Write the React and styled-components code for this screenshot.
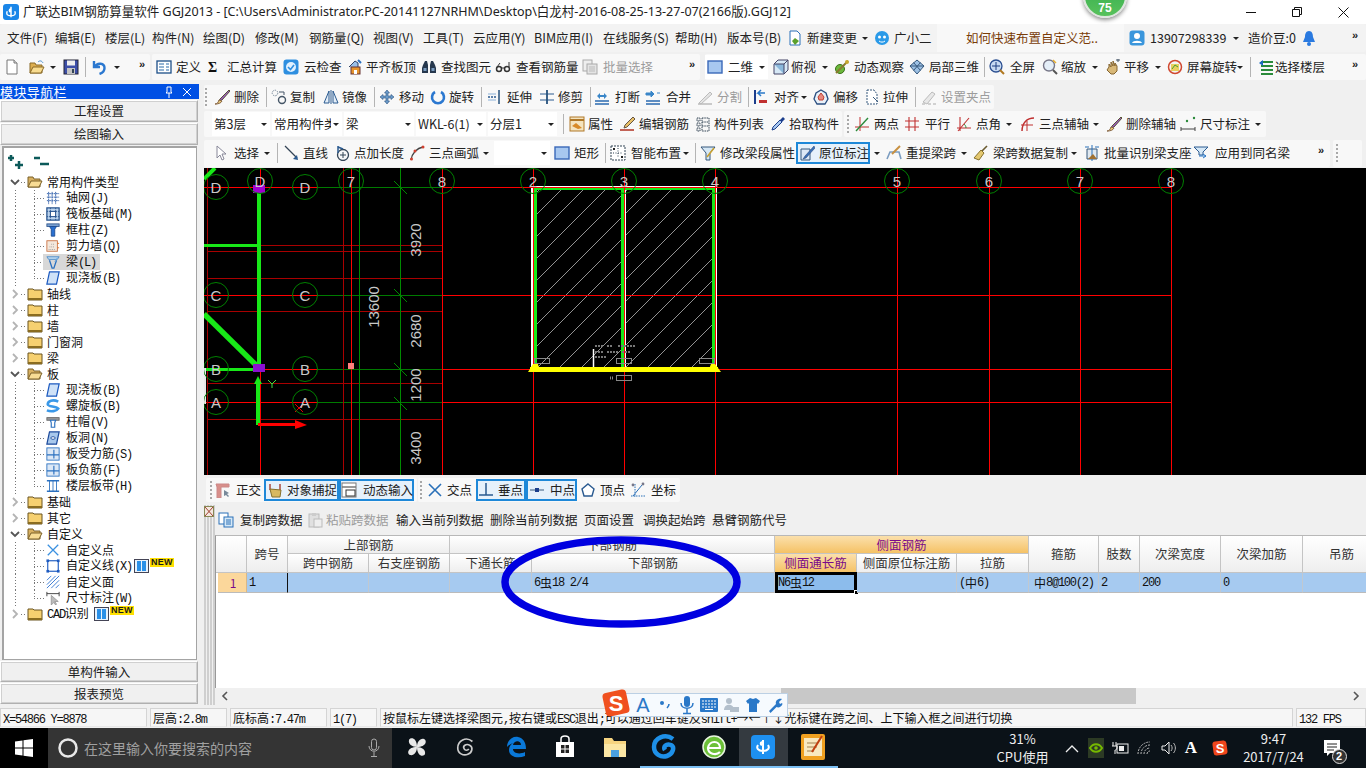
import React from 'react';
import styled, { createGlobalStyle } from 'styled-components';

const Global = createGlobalStyle`
  html, body { margin: 0; padding: 0; background: #f0f0f0; }
  * { box-sizing: border-box; }
`;
const CJK = `"Noto Sans CJK SC", "Noto Sans", "Liberation Sans", sans-serif`;

const Page = styled.div`
  position: relative; width: 1366px; height: 768px; overflow: hidden; background: #f0f0f0;
  font: 12.5px/16px ${CJK}; color: #222; display: flex; flex-direction: column;
`;
/* ---------- icons ---------- */
const icons = {
  new: <><path d="M3 1h7l3 3v11H3z" fill="#fff" stroke="#777"/><path d="M10 1v3h3" fill="#ddd" stroke="#777"/></>,
  open: <><path d="M1 4h5l1 2h6v8H1z" fill="#dcae50" stroke="#8a6a28"/><path d="M4 8h11l-3 6H1z" fill="#f8dc90" stroke="#8a6a28"/><path d="M9 3c2-2 4-1 5 1" fill="none" stroke="#4a90d0"/></>,
  save: <><rect x="1" y="1" width="14" height="14" fill="#3c4ea8" stroke="#223"/><rect x="4" y="1.5" width="8" height="5" fill="#eee"/><rect x="4" y="9" width="8" height="6" fill="#c4c4c4"/><rect x="9" y="10" width="2" height="4" fill="#345"/></>,
  undo: <path d="M3 2v6h6M3.500 8c3-5 10-4 10 1 0 3-2 5-5 6" fill="none" stroke="#2b78d0" strokeWidth="2.400"/>,
  define: <><rect x="1" y="2" width="14" height="12" fill="#fff" stroke="#1c4f88" strokeWidth="1.300"/><path d="M3 5h5M3 8h5M3 11h5M10 5h3M10 8h3M10 11h3" stroke="#2a6aa8"/></>,
  cloud: <><rect x="0.500" y="0.500" width="15" height="15" rx="3" fill="#2e8fe0"/><circle cx="8" cy="8" r="5" fill="#dff0ff"/><path d="M5 8l2.500 2.500L11 6" fill="none" stroke="#2e8fe0" strokeWidth="1.600"/></>,
  flat: <><path d="M2 8l6-6 3 2v4" fill="#9ac0e8" stroke="#346"/><rect x="4" y="8" width="9" height="7" fill="#e8962c" stroke="#633"/><rect x="7" y="11" width="3" height="4" fill="#fff"/><path d="M11 1l3 3" stroke="#2a70c0" strokeWidth="2"/></>,
  bino: <><path d="M2 6l2-4h2l1 4v8H1V9zM14 6l-2-4h-2L9 6v8h6V9z" fill="#26384e"/><rect x="2.500" y="9" width="3" height="3" fill="#7a9cc0"/><rect x="10.500" y="9" width="3" height="3" fill="#7a9cc0"/></>,
  glass: <><circle cx="4" cy="10" r="2.500" fill="none" stroke="#333" strokeWidth="1.500"/><circle cx="12" cy="10" r="2.500" fill="none" stroke="#333" strokeWidth="1.500"/><path d="M6 9h4M2 8l3-4M14 8V3" stroke="#333"/></>,
  batch: <><rect x="1" y="1" width="9" height="11" fill="#eee" stroke="#aaa"/><rect x="5" y="5" width="10" height="10" fill="#e4e4e4" stroke="#aaa"/><path d="M7 8h6M7 10h6M7 12h6" stroke="#bbb"/></>,
  sq: <rect x="1" y="2" width="14" height="12" fill="#a8c8f0" stroke="#3a68b8" strokeWidth="1.400"/>,
  cube: <><path d="M1 5l4-4h10v10l-4 4H1z" fill="#d6e8f6" stroke="#446"/><path d="M1 5h10v10M11 5l4-4" fill="#8ab8dc" stroke="#446"/></>,
  orbit: <><circle cx="6" cy="10" r="4.500" fill="#6cb83c" stroke="#3a7018"/><path d="M2 14L14 2" stroke="#8a7a30" strokeWidth="2"/><circle cx="13" cy="3" r="2" fill="#c8a830"/></>,
  local: <><path d="M8 1l7 6-7 8-7-8z" fill="#9cc0e4" stroke="#36587c"/><path d="M4.500 3.500l7 8M11.500 3.500l-7 8M1 7h14" stroke="#36587c"/></>,
  full: <><circle cx="7" cy="7" r="6" fill="#c8daf2" stroke="#2a4e90" strokeWidth="1.300"/><path d="M7 3v8M3 7h8" stroke="#1c3c80"/><path d="M11 11l4 4" stroke="#b07820" strokeWidth="2"/></>,
  zoom: <><circle cx="7" cy="6.500" r="5.500" fill="#e4eef8" stroke="#778" strokeWidth="1.400"/><path d="M11 11l4 4" stroke="#555" strokeWidth="2"/><path d="M11 1l3 3" stroke="#e8b030" strokeWidth="1.500"/></>,
  hand: <><path d="M4 8V5l2 3V3l2 4V2l2 5V4l2 3v5l-3 3H6l-4-4z" fill="#d8b878" stroke="#846430"/><path d="M11 1h4M13 0v3" stroke="#456"/></>,
  spin: <><circle cx="8" cy="8" r="6.500" fill="#f4f4f4" stroke="#d04830" strokeWidth="1.500"/><rect x="4" y="5" width="8" height="7" fill="#e8d060"/><path d="M5 10l3-4 3 2" stroke="#48a030" fill="none"/></>,
  floors: <><path d="M3 3h12M3 7h12M3 11h12M3 15h12" stroke="#2a8a3a" strokeWidth="2"/><path d="M5 1L1 4l4 3z" fill="#1c6ac0"/></>,
  brush: <><path d="M15 1L6 10l-1 2 3-1 8-9z" fill="#9c5ac0" stroke="#553"/><path d="M1 15c2 0 3-1 4-4l3 1c-1 2-3 3-7 3z" fill="#e8c878" stroke="#864"/></>,
  copy: <><circle cx="4" cy="4" r="2.800" fill="none" stroke="#789" strokeDasharray="1.500 1"/><circle cx="11" cy="11" r="3.500" fill="none" stroke="#456" strokeWidth="1.400"/><path d="M8 3h5v3" fill="none" stroke="#456"/></>,
  mirror: <><path d="M1 14L6 2v12zM15 14L10 2v12z" fill="#e4eef8" stroke="#2a5a90"/><path d="M8 1v14" stroke="#2a5a90"/></>,
  move: <path d="M8 1l2.500 3H9v3h3V5.500L15 8l-3 2.500V9H9v3h1.500L8 15l-2.500-3H7V9H4v1.500L1 8l3-2.500V7h3V4H5.500z" fill="#6a9ac8" stroke="#2a5080" strokeWidth=".6"/>,
  rot: <path d="M5 3A6 6 0 1 0 11 3" fill="none" stroke="#2b78d0" strokeWidth="2.600"/>,
  extend: <><path d="M1 8h8" stroke="#2a5a90" strokeDasharray="2 1" strokeWidth="1.500"/><path d="M1 5h8M1 11h8" stroke="#8ab0d8"/><path d="M12 1v14" stroke="#24507c" strokeWidth="1.500"/></>,
  trim: <><path d="M1 5h14M1 11h14" stroke="#2a5a90"/><path d="M8 1v14" stroke="#24507c" strokeWidth="1.800"/></>,
  cut: <><path d="M1 12h14M1 15h14" stroke="#2a6ab0" strokeWidth="1.300"/><path d="M3 7l3-3v2h4V4l3 3-3 3V8H6v2z" fill="#3a86c8"/></>,
  merge: <><path d="M1 12h14M1 15h14" stroke="#2a6ab0" strokeWidth="1.300"/><path d="M1 4h5V2l3 3-3 3V6H1zM15 4h-3" fill="#3a86c8" stroke="#3a86c8"/></>,
  split: <><path d="M2 14l11-11 2 2-11 10z" fill="#e4e4e4" stroke="#bbb"/><path d="M1 15h14" stroke="#bbb" strokeWidth="1.500"/></>,
  align: <><path d="M2 1v14" stroke="#1c3e8c" strokeWidth="2"/><rect x="6" y="11" width="8" height="3" fill="#c03030"/><path d="M12 4H5l3-3M5 4l3 3" fill="none" stroke="#2a78c8" strokeWidth="1.500"/></>,
  offset: <><path d="M8 1l5 3 2 6-3 5H4l-3-5 2-6z" fill="#e8f0f8" stroke="#2a4e80" strokeWidth="1.300"/><path d="M8 4l3 4-1 3H6L5 8z" fill="#e88a80" stroke="#c04030"/></>,
  stretch: <><path d="M3 1h7l3 4v10H3z" fill="#fff" stroke="#36587c" strokeDasharray="2 1"/><path d="M9 8l5 5" stroke="#36587c"/></>,
  grab: <><path d="M2 13L11 3l3 2-8 10z" fill="#e8e8e8" stroke="#bbb"/><path d="M1 15h3M7 15h3M12 15h3" stroke="#aaa"/></>,
  prop: <><rect x="1" y="1" width="14" height="14" fill="#f4e4c0" stroke="#b07828"/><path d="M1 4h14" stroke="#b07828" strokeWidth="2"/><path d="M3 10l4-3 6 5-4 1z" fill="#d88a28"/></>,
  edit: <><path d="M14 1L6 9l-1 3 3-1 8-8z" fill="#e8c068" stroke="#654"/><path d="M1 14h14" stroke="#b03020" strokeWidth="1.500"/></>,
  list: <path d="M2 2h3v3H2zM2 7h3v3H2zM2 12h3v3H2zM7 2h7v13H7zM7 6h7M7 10h7" fill="none" stroke="#345" strokeDasharray="1.500 .8"/>,
  pick: <><path d="M13 1l2 2-3 3-2-2z" fill="#1c3e8c"/><path d="M10 4l2 2-7 7-3 1 1-3z" fill="#a8c8f0" stroke="#1c3e8c"/></>,
  twopt: <><path d="M1 11h14M6 1v14" stroke="#c03030"/><path d="M2 15L14 2" stroke="#2a8a3a" strokeWidth="1.400"/></>,
  para: <path d="M5 1v14M11 1v14M1 5h14M1 11h14" stroke="#c03030" strokeWidth="1.100"/>,
  angle: <><path d="M4 1v14M1 12h14" stroke="#c03030" strokeWidth="1.100"/><path d="M2 15L13 2" stroke="#c03030" strokeWidth="1.100"/><path d="M10 12c0-2-1-3-2-4" stroke="#2a8a3a" fill="none"/></>,
  arcaxis: <><path d="M3 15C3 7 8 2 15 2" fill="none" stroke="#c03030" strokeWidth="1.500"/><path d="M8 5v10M2 9h12" stroke="#c03030"/></>,
  dim: <><path d="M1 11v4M15 11v4M1 13h14" stroke="#444"/><circle cx="14" cy="2" r="1.200" fill="#2a8a3a"/><circle cx="7" cy="5" r="1.200" fill="#2a8a3a"/></>,
  pointer: <path d="M4 1v12l3-3 2 5 2-1-2-5h4z" fill="#fff" stroke="#889"/>,
  line: <><path d="M2 1l12 12" stroke="#345" strokeWidth="1.300"/><path d="M15 15l-5-1 4-4z" fill="#2a5a90"/></>,
  ptlen: <><circle cx="8" cy="10" r="5.500" fill="none" stroke="#345" strokeWidth="1.300"/><path d="M8 7v6M5 10h6" stroke="#345"/><path d="M3 8V1M3 2l5 2" stroke="#2a5a90" strokeWidth="1.500" fill="none"/></>,
  arc: <><path d="M2 15C3 8 8 3 14 2" fill="none" stroke="#444" strokeWidth="1.300"/><circle cx="2.500" cy="14" r="1.500" fill="#d04030"/><circle cx="6" cy="6" r="1.500" fill="#d04030"/><circle cx="14" cy="2" r="1.500" fill="#d04030"/></>,
  smart: <><rect x="1" y="1" width="14" height="14" fill="#fff" stroke="#345" strokeDasharray="2 1"/><path d="M8 3v10M3 8h10" stroke="#345" strokeDasharray="1 1.500"/><rect x="3" y="3" width="2" height="2" fill="#222"/><rect x="11" y="11" width="2" height="2" fill="#222"/></>,
  funnel: <><path d="M1 2h14l-5 6v7H6V8z" fill="#d6e8f6" stroke="#36587c"/><path d="M14 3l-7 9" stroke="#c8a030" strokeWidth="1.600"/></>,
  mark: <><path d="M2 4h9v11H2z" fill="#dce8f6" stroke="#36587c"/><path d="M15 1L6 11l-2 3 3-1 9-10z" fill="#3a70b8" stroke="#24406c" strokeWidth=".5"/></>,
  reb: <><path d="M1 14l3-7h9l2 7" fill="none" stroke="#7a9cc0" strokeWidth="1.600"/><path d="M14 1L6 9" stroke="#c89040" strokeWidth="2"/></>,
  broom: <><path d="M14 1L8 7" stroke="#6a5a30" strokeWidth="1.600"/><path d="M8 5l3 3-5 7-5-2z" fill="#e4c870" stroke="#86702c"/></>,
  scan: <><path d="M3 4h10v10H3z" fill="#dfe8f0" stroke="#36587c"/><path d="M1 2h4M11 2h4M8 0v16" stroke="#2a70b8"/><path d="M4 14l5-5 4 5" fill="#a07030"/></>,
  apply: <><path d="M1 2h14l-5 5v3H6V7z" fill="#d6e8f6" stroke="#2a5a90"/><path d="M6 11h7M10 9l3 2-3 2" stroke="#2a78c8" fill="none"/></>,
  ortho: <><path d="M1 2h13v3H6v11H2V5z" fill="#d88f8a" stroke="#c88"/><path d="M9 8v6l2-1 2 2 1-1-2-2 2-1z" fill="#789"/></>,
  snap: <><path d="M3 2v6M13 2v6" stroke="#a03020" strokeWidth="1.300"/><path d="M3 7l11 1-1 7H5z" fill="#d8b860" stroke="#86702c"/></>,
  dyn: <><rect x="1" y="1" width="14" height="14" fill="#fff" stroke="#777"/><path d="M1 5h14" stroke="#777" strokeWidth="1.500"/><rect x="5" y="8" width="9" height="6" fill="#fff" stroke="#333"/></>,
  cross: <path d="M2 2l12 12M14 2L2 14" stroke="#2a70b8" strokeWidth="1.600"/>,
  perp: <path d="M8 1v12M1 13h14" stroke="#2a5a90" strokeWidth="1.500"/>,
  mid: <><path d="M1 8h14" stroke="#36587c"/><rect x="6" y="6" width="4" height="4" fill="#1c3e8c"/></>,
  vertex: <path d="M8 2l6 5-2 7H4L2 7z" fill="#fff" stroke="#2a5a90" strokeWidth="1.400"/>,
  coord: <><path d="M1 14h14M5 2v13" stroke="#2a70b8" strokeDasharray="1.500 1"/><path d="M3 14l9-11" stroke="#2a70b8"/><circle cx="13" cy="2" r="1.400" fill="#778"/><circle cx="3" cy="3" r="1.400" fill="#778"/></>,
  docg: <><path d="M3 1h7l3 3v11H3z" fill="#fff" stroke="#2a70b8"/><path d="M8 8l4 3-4 4-3-4z" fill="#5aa02c"/></>,
  bot: <><circle cx="8" cy="8" r="7" fill="#2a9ae8"/><circle cx="5.500" cy="7" r="1.500" fill="#fff"/><circle cx="10.500" cy="7" r="1.500" fill="#fff"/><path d="M5 11c2 1.500 4 1.500 6 0" stroke="#fff" fill="none"/></>,
  user: <><rect x="0.500" y="0.500" width="15" height="15" rx="3" fill="#3a96dc"/><circle cx="8" cy="6" r="3" fill="#fff"/><path d="M3 13c1-3 9-3 10 0z" fill="#fff"/></>,
  bell: <><path d="M8 1c-3 0-4 3-4 6l-2 5h12l-2-5c0-3-1-6-4-6z" fill="#2a7ae0"/><circle cx="8" cy="14" r="2" fill="#2a7ae0"/></>,
  copyd: <><rect x="1" y="1" width="9" height="11" fill="#fff" stroke="#2a70b8"/><rect x="6" y="5" width="9" height="10" fill="#d6e8f6" stroke="#2a70b8"/><path d="M8 8h5M8 10h5M8 12h5" stroke="#2a70b8"/></>,
  pasted: <><rect x="2" y="2" width="10" height="13" fill="#e0e0e0" stroke="#bbb"/><rect x="5" y="1" width="4" height="3" fill="#ccc"/><rect x="7" y="7" width="8" height="8" fill="#eee" stroke="#bbb"/></>,
  grid: <path d="M3 1v14M7 1v14M11 1v14M1 3h14M1 7h14M1 11h14" stroke="#2a5aa8" strokeDasharray="2 .6"/>,
  raft: <><rect x="1" y="1" width="14" height="14" fill="#bcd4ee" stroke="#24508c" strokeWidth="1.400"/><rect x="5" y="5" width="6" height="6" fill="#fff" stroke="#24508c"/><path d="M1 5h14M1 11h14M5 1v14M11 1v14" stroke="#24508c" strokeDasharray="1.500 1"/></>,
  col: <><rect x="1" y="1" width="14" height="3" fill="#7aa0d0" stroke="#345a90"/><path d="M4 4h8L10 7v8H6V7z" fill="#2a70d0" stroke="#1c4a90"/></>,
  wall: <><rect x="1" y="2" width="12" height="12" fill="#f4e8dc" stroke="#c87040"/><path d="M3 12h8M4 9h6M6 6h3" stroke="#999" strokeDasharray="1 1"/><path d="M13 5h2M13 10h2" stroke="#e07020"/></>,
  beam: <><path d="M1 2h14l-2 3H3z" fill="#bcd8f0" stroke="#4a8ac8"/><path d="M4 6l3 9h2l3-9" fill="none" stroke="#2a70c0" strokeWidth="1.500"/><path d="M13 3l-3 5" stroke="#6aa8e0"/></>,
  slab: <path d="M4 1h11l-3 14H1z" fill="#cfe2f8" stroke="#1c5ac0" strokeWidth="1.400"/>,
  spiral: <path d="M14 3C8 0 2 2 2 6c0 3 9 2 12 5-2 3-8 4-13 2" fill="none" stroke="#3a98e8" strokeWidth="3"/>,
  cap: <><rect x="1" y="3" width="14" height="3" fill="#999" stroke="#666"/><path d="M5 6h6l-1 3v5H6V9z" fill="#fff" stroke="#2a70c0" strokeWidth="1.300"/></>,
  hole: <><path d="M4 1h11l-3 14H1z" fill="#a8c8ec" stroke="#1c4a9c" strokeWidth="1.400"/><ellipse cx="8" cy="8" rx="2.500" ry="1.500" fill="#fff" stroke="#1c4a9c"/></>,
  rebar: <><rect x="1" y="1" width="14" height="14" fill="#dce8f6" stroke="#2a70c0"/><path d="M1 9h14M9 3v10" stroke="#2a70c0" strokeWidth="1.300"/></>,
  band: <><path d="M1 2h14M1 14h14" stroke="#2a70c0" strokeWidth="1.500"/><path d="M4 2v12M8 2v12M12 2v12" stroke="#2a70c0"/></>,
  xpt: <path d="M2 2l12 12M14 2L2 14" stroke="#3a90e0" strokeWidth="1.500"/>,
  square: <><rect x="2" y="2" width="12" height="12" fill="#fff" stroke="#1c5ac0" strokeWidth="1.300"/><rect x="0.500" y="0.500" width="3" height="3" fill="#1c5ac0"/><rect x="12.500" y="0.500" width="3" height="3" fill="#1c5ac0"/><rect x="0.500" y="12.500" width="3" height="3" fill="#1c5ac0"/><rect x="12.500" y="12.500" width="3" height="3" fill="#1c5ac0"/></>,
  hatch: <path d="M1 6l5-5M1 11L11 1M1 15L15 1M6 15l9-9M11 15l4-4" stroke="#2a70d0"/>,
  dimcur: <><path d="M1 1v5M15 1v5M1 3h14" stroke="#333"/><path d="M6 5v11l3-3 2 3 1-1-2-3h4z" fill="#bbb" stroke="#999"/></>,
};
const IconSvg = styled.svg`flex: none; display: block;`;
const Icon = ({ i, s = 16 }) => <IconSvg width={s} height={s} viewBox="0 0 16 16">{icons[i]}</IconSvg>;

/* ---------- mixed latin / CJK text ---------- */
const Lat = styled.span`font-family: "Liberation Mono", monospace; font-size: 12px; letter-spacing: -1.25px;`;
const mix = (t) => t.split(/([\x20-\x7e]+)/).map((p, n) => (n % 2 ? <Lat key={n}>{p}</Lat> : p));

/* ---------- title and menu ---------- */
const TitleBar = styled.div`
  height: 24px; flex: none; background: #fff; display: flex; align-items: center; padding-left: 3px; position: relative;
`;
const TitleText = styled.div`margin-left: 4px; font-size: 12.53px; white-space: nowrap; font-family: "Noto Sans", ${CJK}; flex: 1;`;
const AppMark = styled.div`
  width: 16px; height: 16px; border-radius: 3px; background: #1a86e8; display: flex; align-items: center; justify-content: center; flex: none;
`;
const WinBtn = styled.div`width: 46px; height: 24px; display: flex; align-items: center; justify-content: center; flex: none;`;
const Badge = styled.div`
  position: absolute; left: 1083px; top: -26px; width: 44px; height: 44px; border-radius: 50%;
  background: linear-gradient(#2da84a, #58c25c); border: 2px solid #dfe5df; box-shadow: 0 2px 4px rgba(0,0,0,.45);
  color: #fff; font: bold 12px/14px "Liberation Sans", sans-serif; text-align: center; padding-top: 25px;
`;

/* ---------- tool rows ---------- */
const Row = styled.div`
  flex: none; height: ${p => p.$h}px; display: flex; align-items: ${p => p.$align || 'center'}; background: #f0f0f0;
`;
const Group = styled.div`
  flex: none; display: flex; align-items: center; height: ${p => p.$gh}px; width: ${p => p.$w}px; margin-left: ${p => p.$ml}px;
  background: ${p => p.$bg}; border-radius: 2px;
`;
const Slot = styled.div`
  flex: none; width: ${p => p.$w}px; height: 100%; display: flex; align-items: center; padding-left: ${p => p.$pl || 0}px; position: relative;
`;
const Label = styled.span`
  white-space: nowrap; margin-left: ${p => p.$ml || 0}px; color: ${p => p.$off ? '#9c9c9c' : '#222'};
`;
const Sep = styled.div`width: 1px; height: 20px; background: #b4b4b4;`;
const Caret = styled.div`
  flex: none; width: 0; height: 0; border-left: 3px solid transparent; border-right: 3px solid transparent; border-top: 3px solid #222;
`;
const More = styled.span`font: bold 11px/12px "Liberation Sans", sans-serif; color: #222; margin-top: -6px;`;
const Grip = styled.div`
  width: 2px; height: 18px; background: repeating-linear-gradient(#a8a8a8 0 2px, transparent 2px 4px);
`;
const Combo = styled.div`
  width: ${p => p.$w}px; height: 24px; background: #fff; display: flex; align-items: center; padding: 0 3px 0 2px; gap: 2px;
`;
const ComboText = styled.span`
  flex: 1; white-space: nowrap; min-width: 0; margin-left: ${p => p.$ml || 0}px; overflow: ${p => p.$clip ? 'hidden' : 'visible'};
`;
const SelBox = styled.div`
  width: ${p => p.$w}px; height: 22px; display: flex; align-items: center; padding-left: ${p => p.$pl}px;
  background: #e6f1fb; border: 2px solid #1e88d8; flex: none;
`;
const Note = styled.div`
  width: ${p => p.$w}px; height: 28px; background: #f8f8f8; color: #7a3c08; padding-left: ${p => p.$pl}px; display: flex; align-items: center; white-space: nowrap;
`;

const startOf = (it) =>
  it.st ?? (it.s != null ? it.s : it.a != null ? it.a - 3 : it.m != null ? it.m - 5 : it.g != null ? it.g - 1 : it.x0 != null ? it.x0 : it.c != null ? it.c - 8 : it.x);

const renderTool = (it, w, key) => {
  const start = startOf(it);
  if (it.s != null) return <Slot key={key} $w={w}><Sep /></Slot>;
  if (it.a != null) return <Slot key={key} $w={w}><Caret /></Slot>;
  if (it.m != null) return <Slot key={key} $w={w}><More>»</More></Slot>;
  if (it.g != null) return <Slot key={key} $w={w}><Grip /></Slot>;
  if (it.note) return <Slot key={key} $w={w}><Note $w={it.x1 - it.x0} $pl={it.x - it.x0}>{it.note}</Note></Slot>;
  if (it.combo) return (
    <Slot key={key} $w={w}>
      <Combo $w={it.x1 - it.x0}>
        {it.i && <Icon i={it.i} />}
        <ComboText $ml={it.i ? 3 : 0} $clip={it.clip}>{it.combo}</ComboText>
        <Caret />
      </Combo>
    </Slot>
  );
  if (it.c == null) return <Slot key={key} $w={w}><Label $off={it.off}>{it.t}</Label></Slot>;
  const lm = it.x != null ? it.x - it.c - 8 : 0;
  const pad = it.c - 8 - start;
  const inner = <><Icon i={it.i} />{it.t && <Label $ml={lm} $off={it.off}>{it.t}</Label>}</>;
  if (it.sel) return <Slot key={key} $w={w}><SelBox $w={it.sel - start} $pl={Math.max(pad - 2, 0)}>{inner}</SelBox></Slot>;
  return <Slot key={key} $w={w} $pl={pad}>{inner}</Slot>;
};

const ToolGroup = ({ start, end, items, ml = 0, gh = 24, bg = '#f8f8f8' }) => (
  <Group $w={end - start} $ml={ml} $gh={gh} $bg={bg}>
    {[...(start < startOf(items[0]) ? [{ st: start, x: start, t: '' }] : []), ...items].map((it, n, all) => {
      const next = n + 1 < all.length ? startOf(all[n + 1]) : end;
      return renderTool(it, next - startOf(it), n);
    })}
  </Group>
);

const menuItems = [
  { x: 7, t: '文件(F)' }, { x: 55, t: '编辑(E)' }, { x: 105, t: '楼层(L)' }, { x: 152, t: '构件(N)' }, { x: 203, t: '绘图(D)' },
  { x: 255, t: '修改(M)' }, { x: 309, t: '钢筋量(Q)' }, { x: 373, t: '视图(V)' }, { x: 423, t: '工具(T)' }, { x: 473, t: '云应用(Y)' },
  { x: 534, t: 'BIM应用(I)' }, { x: 603, t: '在线服务(S)' }, { x: 675, t: '帮助(H)' }, { x: 727, t: '版本号(B)' },
  { c: 795, i: 'docg', t: '新建变更', x: 807 }, { a: 865 }, { c: 882, i: 'bot', t: '广小二', x: 894 },
  { note: '如何快速布置自定义范..', x0: 937, x1: 1124, x: 966 },
  { c: 1137, i: 'user', t: '13907298339', x: 1150 }, { a: 1236 }, { x: 1248, t: '造价豆:0' }, { c: 1309, i: 'bell' }, { m: 1357 },
];
const main1 = [
  { c: 12, i: 'new' }, { c: 37, i: 'open' }, { a: 53 }, { c: 71, i: 'save' }, { s: 85 }, { c: 99, i: 'undo' }, { a: 117 }, { m: 144 },
];
const Sigma = styled.span`font: bold 14px/16px "Liberation Serif", serif; color: #111; width: 12px; margin-right: 1px;`;
const main2 = [
  { c: 164, i: 'define', t: '定义', x: 176 }, { x: 208, t: <Sigma>Σ</Sigma> }, { x: 227, t: '汇总计算' },
  { c: 291, i: 'cloud', t: '云检查', x: 304 }, { c: 355, i: 'flat', t: '平齐板顶', x: 366 }, { c: 429, i: 'bino', t: '查找图元', x: 441 },
  { c: 503, i: 'glass', t: '查看钢筋量', x: 516 }, { c: 590, i: 'batch', t: '批量选择', x: 603, off: 1 }, { m: 694 },
];
const main3 = [
  { combo: '二维', i: 'sq', x0: 705, x1: 768 }, { c: 781, i: 'cube', t: '俯视', x: 791 }, { a: 825 }, { c: 842, i: 'orbit', t: '动态观察', x: 854 },
  { c: 917, i: 'local', t: '局部三维', x: 929 }, { s: 984 }, { c: 997, i: 'full', t: '全屏', x: 1010 }, { c: 1050, i: 'zoom', t: '缩放', x: 1061 }, { a: 1095 },
  { c: 1113, i: 'hand', t: '平移', x: 1124 }, { a: 1158 }, { c: 1175, i: 'spin', t: '屏幕旋转', x: 1187 }, { a: 1240 }, { s: 1250 },
  { c: 1266, i: 'floors', t: '选择楼层', x: 1275 }, { m: 1357 },
];
const row2 = [
  { g: 206 }, { c: 222, i: 'brush', t: '删除', x: 234 }, { s: 266 }, { c: 279, i: 'copy', t: '复制', x: 290 }, { c: 331, i: 'mirror', t: '镜像', x: 342 }, { s: 374 },
  { c: 387, i: 'move', t: '移动', x: 399 }, { c: 438, i: 'rot', t: '旋转', x: 449 }, { s: 481 }, { c: 495, i: 'extend', t: '延伸', x: 507 },
  { c: 547, i: 'trim', t: '修剪', x: 558 }, { s: 590 }, { c: 602, i: 'cut', t: '打断', x: 615 }, { c: 653, i: 'merge', t: '合并', x: 666 },
  { c: 705, i: 'split', t: '分割', x: 717, off: 1 }, { s: 748 }, { c: 761, i: 'align', t: '对齐', x: 774 }, { a: 804 }, { c: 821, i: 'offset', t: '偏移', x: 833 },
  { c: 872, i: 'stretch', t: '拉伸', x: 883 }, { s: 915 }, { c: 929, i: 'grab', t: '设置夹点', x: 941, off: 1 },
];
const row3a = [
  { combo: '第3层', x0: 212, x1: 270 }, { combo: '常用构件类型', x0: 272, x1: 342, clip: 1 }, { combo: '梁', x0: 344, x1: 414 }, { combo: 'WKL-6(1)', x0: 416, x1: 486 },
  { combo: '分层1', x0: 488, x1: 557 }, { s: 563 }, { c: 577, i: 'prop', t: '属性', x: 588 }, { c: 627, i: 'edit', t: '编辑钢筋', x: 639 },
  { c: 703, i: 'list', t: '构件列表', x: 714 }, { c: 778, i: 'pick', t: '拾取构件', x: 789 },
];
const row3b = [
  { g: 848 }, { c: 862, i: 'twopt', t: '两点', x: 874 }, { c: 912, i: 'para', t: '平行', x: 925 }, { c: 964, i: 'angle', t: '点角', x: 976 }, { a: 1009 },
  { c: 1027, i: 'arcaxis', t: '三点辅轴', x: 1039 }, { a: 1096 }, { c: 1114, i: 'brush', t: '删除辅轴', x: 1126 }, { c: 1188, i: 'dim', t: '尺寸标注', x: 1200 }, { a: 1258 },
];
const row4 = [
  { c: 221, i: 'pointer', t: '选择', x: 234 }, { a: 267 }, { s: 277 }, { c: 291, i: 'line', t: '直线', x: 303 }, { c: 343, i: 'ptlen', t: '点加长度', x: 354 },
  { c: 417, i: 'arc', t: '三点画弧', x: 429 }, { a: 486 }, { combo: ' ', x0: 494, x1: 550 }, { c: 562, i: 'sq', t: '矩形', x: 574 }, { s: 605 },
  { c: 618, i: 'smart', t: '智能布置', x: 631 }, { a: 686 }, { s: 695 }, { c: 708, i: 'funnel', t: '修改梁段属性', x: 720 },
  { st: 796, c: 807, i: 'mark', t: '原位标注', x: 819, sel: 870 }, { a: 877 }, { c: 894, i: 'reb', t: '重提梁跨', x: 906 }, { a: 964 },
  { c: 981, i: 'broom', t: '梁跨数据复制', x: 993 }, { a: 1074 }, { c: 1092, i: 'scan', t: '批量识别梁支座', x: 1104 }, { c: 1201, i: 'apply', t: '应用到同名梁', x: 1215 }, { m: 1323 },
];
const row4b = [{ g: 1337 }];
const snapA = [
  { g: 211 }, { c: 223, i: 'ortho', t: '正交', x: 236 },
  { st: 264, c: 275, i: 'snap', t: '对象捕捉', x: 287, sel: 339 }, { st: 339, c: 349, i: 'dyn', t: '动态输入', x: 363, sel: 414 },
];
const snapB = [
  { g: 421 }, { c: 435, i: 'cross', t: '交点', x: 447 }, { st: 476, c: 485, i: 'perp', t: '垂点', x: 497, sel: 526 }, { st: 526, c: 537, i: 'mid', t: '中点', x: 550, sel: 577 },
  { c: 588, i: 'vertex', t: '顶点', x: 600 }, { c: 638, i: 'coord', t: '坐标', x: 651 },
];
const tableTools = [
  { c: 226, i: 'copyd', t: '复制跨数据', x: 240 }, { c: 315, i: 'pasted', t: '粘贴跨数据', x: 326, off: 1 }, { x: 396, t: '输入当前列数据' }, { x: 490, t: '删除当前列数据' },
  { x: 584, t: '页面设置' }, { x: 643, t: '调换起始跨' }, { x: 712, t: '悬臂钢筋代号' },
];

/* ---------- navigator ---------- */
const Body = styled.div`flex: none; height: 624px; display: flex;`;
const Nav = styled.div`flex: none; width: 204px; display: flex; flex-direction: column;`;
const NavHead = styled.div`
  width: 199px; height: 15px; background: #0050e4; color: #fff; display: flex; align-items: center; padding: 0 3px 0 0; font-size: 13px; line-height: 15px; flex: none;
`;
const NavTitle = styled.span`flex: 1; letter-spacing: .4px;`;
const NavBtn = styled.div`
  width: 198px; height: ${p => p.$h || 22}px; flex: none; border: 1px solid #b0b0b0; border-top-color: #fff; border-left-color: #fff; box-shadow: 0 0 0 1px #d0d0d0 inset;
  background: #f0f0f0; display: flex; align-items: center; justify-content: center; margin-top: 1px; color: #222;
`;
const TreeBox = styled.div`
  margin: 1px 0 0 2px; width: 195px; height: 514px; flex: none; background: #fff; border: 2px solid #a4a4a4; border-right-width: 1px; border-bottom-width: 1px; overflow: hidden;
`;
const TreeTools = styled.div`height: 26px; display: flex; align-items: center; gap: 6px; padding: 3px 0 0 3px;`;
const TreeRow = styled.div`height: 16px; display: flex; align-items: center; white-space: nowrap; font-size: 12px; color: #111;`;
const FolderGuide = styled.div`
  width: 23px; height: 16px; flex: none; display: flex; align-items: center; justify-content: flex-end;
  background: repeating-linear-gradient(90deg, #777 0 1px, transparent 1px 3px) 17px 8px / 6px 1px no-repeat;
  padding-right: 6px;
`;
const ChildGuide = styled.div`
  width: 42px; height: 16px; flex: none;
  background:
    repeating-linear-gradient(#777 0 1px, transparent 1px 3px) 11px 0 / 1px 16px no-repeat,
    repeating-linear-gradient(#777 0 1px, transparent 1px 3px) 30px 0 / 1px ${p => (p.$last ? 8 : 16)}px no-repeat,
    repeating-linear-gradient(90deg, #777 0 1px, transparent 1px 3px) 30px 8px / 12px 1px no-repeat;
`;
const TreeName = styled.span`
  margin-left: ${p => p.$ml}px; background: ${p => p.$sel ? '#d8d8d8' : 'transparent'}; padding: ${p => p.$sel ? '0 14px 0 6px' : '0'};
`;
const SelIcon = styled.div`display: flex; align-items: center; background: #d8d8d8; height: 16px; margin-left: -3px; padding-left: 3px; width: 57px;`;
const NewTag = styled.span`
  font: bold 9px/9px "Liberation Sans", sans-serif; background: #ffe000; color: #1a1a1a; padding: 0 1px; margin: -8px 0 0 1px; letter-spacing: .3px;
`;
const NewBox = styled.span`
  width: 15px; height: 14px; margin-left: ${p => p.$ml}px; border: 1px solid #445; background: #e8f2fc; display: inline-flex; gap: 1px; padding: 1px 2px; flex: none;
`;
const NewBar = styled.i`flex: 1; background: #2a90e8;`;
const Badge2 = ({ ml }) => <><NewBox $ml={ml}><NewBar /><NewBar /></NewBox><NewTag>NEW</NewTag></>;

const ChevronSvg = styled.svg`flex: none;`;
const Chevron = ({ open }) => (
  <ChevronSvg width="12" height="10" viewBox="0 0 12 10">
    <path d={open ? 'M2 3l4 4 4-4' : 'M4 1l4 4-4 4'} fill="none" stroke={open ? '#555' : '#b4b4b4'} strokeWidth="1.800" />
  </ChevronSvg>
);
const Folder = ({ open }) => (
  <ChevronSvg width="16" height="14" viewBox="0 0 16 14">
    {open
      ? <><path d="M1 2h5l1 2h6v8H1z" fill="#d8b060" stroke="#7a6028" /><path d="M4 6h11l-3 6H1z" fill="#f8dc94" stroke="#7a6028" /></>
      : <><path d="M1 2h5l1 1h8v10H1z" fill="#f6d070" stroke="#6a5420" /><path d="M1 11h14v2H1z" fill="#8a6c20" /></>}
  </ChevronSvg>
);
const tree = [
  ['f', '常用构件类型', 1], ['c', '轴网(J)', 'grid'], ['c', '筏板基础(M)', 'raft'], ['c', '框柱(Z)', 'col'], ['c', '剪力墙(Q)', 'wall'], ['c', '梁(L)', 'beam', 'sel'], ['c', '现浇板(B)', 'slab', 'last'],
  ['f', '轴线'], ['f', '柱'], ['f', '墙'], ['f', '门窗洞'], ['f', '梁'],
  ['f', '板', 1], ['c', '现浇板(B)', 'slab'], ['c', '螺旋板(B)', 'spiral'], ['c', '柱帽(V)', 'cap'], ['c', '板洞(N)', 'hole'], ['c', '板受力筋(S)', 'rebar'], ['c', '板负筋(F)', 'rebar'], ['c', '楼层板带(H)', 'band', 'last'],
  ['f', '基础'], ['f', '其它'],
  ['f', '自定义', 1], ['c', '自定义点', 'xpt'], ['c', '自定义线(X)', 'square', 'new'], ['c', '自定义面', 'hatch'], ['c', '尺寸标注(W)', 'dimcur', 'last'],
  ['f', 'CAD识别', 0, 'new'],
];

/* ---------- work area ---------- */
const Work = styled.div`flex: none; width: 1162px; display: flex; flex-direction: column;`;
const CadSvg = styled.svg`display: block; flex: none; background: #000;`;
const Red = '#ff0000', Dark = '#a80000', Grn = '#007a00';
const Bubble = ({ x, y, t }) => (
  <g>
    <circle cx={x} cy={y} r="12.500" fill="none" stroke="#008000" />
    <text x={x} y={y + 5.500} textAnchor="middle" fontFamily="Liberation Sans, sans-serif" fontSize="15" fill="#c8c8c8">{t}</text>
  </g>
);
const Dim = ({ x, y, t }) => (
  <text transform={`rotate(-90 ${x} ${y})`} x={x} y={y + 5.500} textAnchor="middle" fontFamily="Liberation Sans, sans-serif" fontSize="15" fill="#c8c8c8">{t}</text>
);
const Cad = () => (
  <CadSvg width="1162" height="307" viewBox="0 0 1162 307">
    <defs>
      <pattern id="hat" width="22" height="22" patternUnits="userSpaceOnUse" patternTransform="translate(3 2)">
        <path d="M0 22L22 0M-3 3L3 -3M19 25L25 19" stroke="#b8b8b8" strokeWidth=".8" />
      </pattern>
    </defs>
    <rect x="333" y="22" width="85" height="177" fill="url(#hat)" />
    <rect x="422" y="22" width="86" height="177" fill="url(#hat)" />
    <g shapeRendering="crispEdges">
      {[77, 83, 110, 143, 215, 251].map(y => <line key={y} x1="3" x2="238" y1={y + .5} y2={y + .5} stroke={Dark} />)}
      {[19, 127, 201, 234].map(y => <line key={y} x1="0" x2="967" y1={y + .5} y2={y + .5} stroke={Red} />)}
      {[19, 127, 201, 234].map(y => <line key={y} x1="114" x2="238" y1={y + .5} y2={y + .5} stroke={Grn} />)}
      <line x1="139.500" x2="139.500" y1="0" y2="307" stroke={Dark} />
      <line x1="3.500" x2="3.500" y1="0" y2="307" stroke={Dark} />
      <line x1="155.500" x2="155.500" y1="0" y2="307" stroke="#008a00" />
      <line x1="196.500" x2="196.500" y1="0" y2="307" stroke="#008a00" />
      <rect x="328" y="18" width="184" height="1" fill="#fff" />
      <rect x="327" y="20" width="2" height="180" fill="#fff" />
      <rect x="512" y="20" width="1" height="180" fill="#fff" />
      <rect x="421" y="20" width="1" height="180" fill="#fff" />
      <rect x="330" y="20" width="3" height="180" fill="#18e818" />
      <rect x="417" y="20" width="3" height="180" fill="#18e818" />
      <rect x="508" y="20" width="3" height="180" fill="#18e818" />
      <rect x="330" y="20" width="181" height="2" fill="#18e818" />
      {[56, 147, 238, 329, 420, 511, 693, 785, 876, 967].map(x => <line key={x} x1={x + .5} x2={x + .5} y1="0" y2="307" stroke={Red} />)}
      <rect x="53" y="19" width="4" height="181" fill="#18e818" />
      <rect x="0" y="76" width="54" height="3" fill="#18e818" />
      <rect x="0" y="200" width="54" height="3" fill="#18e818" />
      <rect x="0" y="200" width="2" height="36" fill="#e8e8e8" />
    </g>
    <path d="M0 146L53 198" stroke="#18e818" strokeWidth="5.500" />
    <path d="M0 11L11 0" stroke="#18e818" strokeWidth="4" />
    {[19, 127, 201, 235].map(y => <path key={y} d={`M190 ${y - 6}l13 13`} stroke="#008a00" />)}
    <rect x="49" y="17" width="12" height="8" fill="#a000d0" />
    <rect x="49" y="196" width="12" height="8" fill="#8a10d0" />
    <path d="M52 257V216h-2l4-8 4 8h-2v41z" fill="#18e818" />
    <path d="M54 255h37v-3l12 5-12 4v-3H54z" fill="#ff0000" />
    <path d="M64 212l4 4 4-4M68 216v4" stroke="#40e040" fill="none" />
    <path d="M91 236l8 8M99 236l-8 8" stroke="#e00000" />
    <rect x="144" y="195" width="6" height="6" fill="#ff8080" />
    <rect x="326" y="199" width="188" height="5" fill="#ffff00" />
    <path d="M324 204l5-8 5 0 2 8zM504 204l3-8 4 0 6 8z" fill="#ffff00" />
    <g fill="none" stroke="#888">
      <rect x="330.500" y="190.500" width="15" height="5" />
      <rect x="412.500" y="190.500" width="15" height="5" />
      <rect x="495.500" y="190.500" width="15" height="5" />
      <rect x="412.500" y="207.500" width="15" height="5" />
    </g>
    <path d="M389.500 181v18" stroke="#fff" strokeWidth="1.500" />
    <path d="M391 178h9M403 178h5M414 178h18M391 184h9M403 184h11M418 184h9M391 189h11" stroke="#777" strokeWidth="2" strokeDasharray="2 1" />
    <path d="M406 210h4" stroke="#888" strokeWidth="3" strokeDasharray="1 1" />
    {[['D', 12, 19], ['D', 56, 13], ['D', 101, 19], ['7', 147, 13], ['8', 238, 13], ['2', 329, 13], ['3', 420, 13], ['4', 511, 13],
      ['C', 12, 127], ['C', 101, 127], ['B', 12, 201], ['B', 101, 201], ['A', 12, 234], ['A', 101, 234],
      ['5', 693, 13], ['6', 785, 13], ['7', 876, 13], ['8', 967, 13]].map(([t, x, y]) => <Bubble key={t + x} x={x} y={y} t={t} />)}
    <Dim x={211} y={72} t="3920" />
    <Dim x={169} y={139} t="13600" />
    <Dim x={211} y={163} t="2680" />
    <Dim x={211} y={217} t="1200" />
    <Dim x={211} y={280} t="3400" />
  </CadSvg>
);

const TablePanel = styled.div`flex: none; height: 200px; display: flex; background: #f0f0f0;`;
const SideGrip = styled.div`
  flex: none; width: 11px; display: flex; flex-direction: column;
  background: repeating-linear-gradient(90deg, #cfcfcf 0 2px, transparent 2px 3px), #f0f0f0;
`;
const CloseMark = styled.div`width: 10px; height: 11px; margin-top: 1px; background: #f4e8e0; border: 1px solid #885; display: flex;`;
const TableArea = styled.div`flex: 1; min-width: 0; display: flex; flex-direction: column;`;
const Sheet = styled.div`
  flex: none; height: 153px; background: #fff; border-top: 1px solid #b8b8b8; border-left: 1px solid #999; overflow: hidden;
`;
const SheetGrid = styled.div`
  display: grid; width: 1166px; grid-template-columns: 31px 41px 81px 81px 82px 243px 82px 100px 72px 70px 41px 81px 82px 78px; grid-template-rows: 18px 19px 20px;
`;
const Head = styled.div`
  grid-column: ${p => p.$c}; grid-row: ${p => p.$r}; display: flex; align-items: center; justify-content: center; white-space: nowrap;
  border-right: 1px solid #c4c4c4; border-bottom: 1px solid #c4c4c4;
  background: ${p => p.$hot ? 'linear-gradient(#fbe0ac, #f5c266)' : 'linear-gradient(#fff, #eeeeee)'}; color: ${p => p.$hot ? '#7a0a8a' : '#333'};
`;
const Cell = styled.div`
  position: relative; display: flex; align-items: center; padding-left: ${p => p.$pl ?? 2}px; white-space: nowrap; font-size: 12px;
  background: #a6caf0; border-right: 1px solid ${p => p.$ink ? '#111' : '#c0c8d0'}; border-bottom: 1px solid #bbb; color: #111;
`;
const RowNo = styled(Cell)`background: #fbd79b; color: #7a0a8a; justify-content: center; border-right-color: #d8b888; margin-left: 2px;`;
const ActiveCell = styled(Cell)`background: #8cbcec; border: 3px solid #000; padding-left: 0; margin-top: -1px;`;
const Handle = styled.div`position: absolute; right: -5px; bottom: -5px; width: 5px; height: 5px; background: #000; border: 1px solid #fff;`;
const Scroll = styled.div`flex: none; height: 16px; display: flex; align-items: center; background: #f0f0f0;`;
const ScrollArrow = styled.div`width: 20px; flex: none; display: flex; justify-content: center;`;
const ScrollTrack = styled.div`flex: 1; height: 16px; padding-left: ${p => p.$l}px; padding-right: ${p => p.$r}px;`;
const ScrollThumb = styled.div`height: 100%; background: #c8c8c8;`;
const Ellipse = styled.svg`position: absolute; left: 498px; top: 533px; pointer-events: none;`;

/* ---------- status ---------- */
const Status = styled.div`flex: none; height: 20px; display: flex; gap: 3px; overflow: hidden; font-size: 12px;`;
const StatusCell = styled.div`
  flex: none; width: ${p => p.$w}px; height: 19px; border: 1px solid #d4d4d4; border-bottom-color: #e8e8e8; background: #f6f6f6; padding-left: 2px; white-space: nowrap; overflow: hidden; line-height: 18px; color: #111;
`;

/* ---------- IME ---------- */
const Ime = styled.div`
  position: absolute; left: 612px; top: 693px; width: 176px; height: 24px; background: #f6fafe; border: 1px solid #bcd0e4; display: flex; align-items: center; padding-left: 19px;
`;
const ImeSlot = styled.div`width: 22px; flex: none; display: flex; justify-content: center;`;
const ImeA = styled.span`font: 20px/22px "Liberation Sans", sans-serif; color: #2a78c8;`;
const SogouMark = styled.svg`position: absolute; left: 601px; top: 688px;`;

/* ---------- taskbar ---------- */
const Taskbar = styled.div`flex: none; height: 40px; background: #0b1218; display: flex; color: #eee;`;
const StartBtn = styled.div`width: 48px; background: #000; display: flex; align-items: center; justify-content: center; flex: none;`;
const Search = styled.div`
  width: 344px; background: #343434; display: flex; align-items: center; padding: 0 12px 0 9px; flex: none; color: #a0a0a0; font-size: 14px; gap: 5px;
`;
const SearchText = styled.span`flex: 1;`;
const TaskApp = styled.div`
  width: 49.500px; flex: none; display: flex; align-items: center; justify-content: center; position: relative;
  background: ${p => p.$active ? '#343a40' : 'transparent'};
  border-bottom: 2px solid ${p => p.$on ? '#7cc0f4' : 'transparent'};
`;
const Tray = styled.div`
  width: ${p => p.$w}px; flex: none; display: flex; flex-direction: column; align-items: center; justify-content: center; margin-left: ${p => p.$ml || 0}px;
  font-size: 13px; line-height: 18px; color: #eee; white-space: nowrap; position: relative;
`;
const TrayA = styled.span`font: bold 17px/20px "Liberation Serif", serif; color: #fff;`;
const NotifCount = styled.span`
  position: absolute; left: 22px; top: 21px; width: 15px; height: 15px; border-radius: 50%; background: #333; border: 1px solid #ddd; color: #fff;
  font: bold 11px/13px "Liberation Sans", sans-serif; text-align: center;
`;

const tApps = [
  <svg width="24" height="24" viewBox="0 0 24 24"><path d="M12 12C7 12 3 9 4 5c1-3 8-3 8 7zM12 12c0-5 3-9 7-8 3 1 3 8-7 8zM12 12c5 0 9 3 8 7-1 3-8 3-8-7zM12 12c0 5-3 9-7 8-3-1-3-8 7-8z" fill="#e8e8e8" /></svg>,
  <svg width="22" height="22" viewBox="0 0 24 24"><path d="M19 6C12 0 3 5 3 13c0 6 6 9 11 7 5-2 6-8 2-10-4-2-8 1-6 4 1 2 4 2 5 0" fill="none" stroke="#ccc" strokeWidth="1.800" /></svg>,
  <svg width="24" height="24" viewBox="0 0 24 24"><path d="M3 12C3 5 9 1 14 2c5 1 8 5 8 12H9c0 4 6 6 12 3v4c-7 3-16 1-16-6 0-3 1-5 4-7-3 1-5 3-6 4zM9 10h8c0-5-7-5-8 0z" fill="#0a78d8" /></svg>,
  <svg width="22" height="24" viewBox="0 0 22 24"><path d="M2 7h18v15H2z" fill="#fff" /><path d="M7 7V4c0-4 8-4 8 0v3" fill="none" stroke="#fff" strokeWidth="1.500" /><path d="M7 10h3.500v3.500H7zM11.500 10H15v3.500h-3.500zM7 14.500h3.500V18H7zM11.500 14.500H15V18h-3.500z" fill="#222" /></svg>,
  <svg width="24" height="22" viewBox="0 0 24 22"><path d="M1 2h8l2 3h12v16H1z" fill="#f6d480" /><path d="M1 8h22v13H1z" fill="#fbe6a4" /><path d="M8 14h8v7H8z" fill="#4aa0e0" /></svg>,
  <svg width="26" height="26" viewBox="0 0 26 26"><path d="M22 5C14-1 3 4 3 13c0 7 7 11 13 9 6-2 8-9 4-11-5-2-8 2-6 5" fill="none" stroke="#1e90e8" strokeWidth="4.500" /></svg>,
  <svg width="26" height="28" viewBox="0 0 26 28"><circle cx="13" cy="14" r="11" fill="#6cc038" stroke="#e8f4e0" strokeWidth="1.500" /><path d="M7 15h12c0-8-11-8-12 0 0 6 8 8 12 4" fill="none" stroke="#fff" strokeWidth="2.200" /></svg>,
  <svg width="24" height="24" viewBox="0 0 24 24"><rect width="24" height="24" rx="4" fill="#1e90f0" /><path d="M12 5v14M12 7c-3 0-3 3 0 3M7 10c-2 3 0 6 5 6s7-3 5-6" fill="none" stroke="#fff" strokeWidth="2" /></svg>,
  <svg width="24" height="26" viewBox="0 0 24 26"><rect width="24" height="26" rx="2" fill="#f0a020" /><rect x="3" y="4" width="18" height="18" fill="#f8e8c0" /><path d="M6 9h10M6 13h10M6 17h7" stroke="#a08050" /><path d="M21 2L11 18" stroke="#c04010" strokeWidth="2" /></svg>,
];

export default function App() {
  return (
    <Page>
      <Global />
      <TitleBar>
        <AppMark>
          <svg width="12" height="12" viewBox="0 0 16 16"><path d="M8 1v14M8 4C5 4 5 8 8 8M3 7c-2 4 0 6 5 6s7-2 5-6" fill="none" stroke="#fff" strokeWidth="2" /></svg>
        </AppMark>
        <TitleText>广联达BIM钢筋算量软件 GGJ2013 - [C:\Users\Administrator.PC-20141127NRHM\Desktop\白龙村-2016-08-25-13-27-07(2166版).GGJ12]</TitleText>
        <WinBtn><svg width="10" height="10" viewBox="0 0 10 10"><path d="M0 5.500h10" stroke="#111" /></svg></WinBtn>
        <WinBtn><svg width="10" height="10" viewBox="0 0 10 10"><path d="M.5 2.500h7v7h-7zM2.500 2.500v-2h7v7h-2" fill="none" stroke="#111" /></svg></WinBtn>
        <WinBtn><svg width="11" height="11" viewBox="0 0 11 11"><path d="M.5.500l10 10M10.500.500l-10 10" stroke="#111" /></svg></WinBtn>
      </TitleBar>

      <Row $h={30} $align="flex-start">
        <ToolGroup start={0} end={1366} items={menuItems} gh={28} bg="#f3f3f3" />
      </Row>
      <Row $h={30} $align="flex-start">
        <ToolGroup start={0} end={150} items={main1} gh={26} />
        <ToolGroup start={152} end={700} items={main2} gh={26} ml={2} />
        <ToolGroup start={705} end={1366} items={main3} gh={26} ml={5} />
      </Row>

      <Body>
        <Nav>
          <NavHead>
            <NavTitle>模块导航栏</NavTitle>
            <svg width="10" height="12" viewBox="0 0 10 12"><path d="M3 1h4v5l1 1H2l1-1zM5 7v5" fill="none" stroke="#fff" /></svg>
            <svg width="22" height="10" viewBox="0 0 22 10"><path d="M9 1l8 8M17 1l-8 8" stroke="#fff" /></svg>
          </NavHead>
          <NavBtn>工程设置</NavBtn>
          <NavBtn>绘图输入</NavBtn>
          <TreeBox>
            <TreeTools>
              <svg width="20" height="18" viewBox="0 0 20 18"><path d="M4 1v6M1 4h6M12 7v8M8 11h8" stroke="#0c5a5a" strokeWidth="2.500" /></svg>
              <svg width="16" height="18" viewBox="0 0 16 18"><path d="M1 4h6M7 10h9" stroke="#0c5a5a" strokeWidth="2.500" /></svg>
            </TreeTools>
            {tree.map(([type, name, a, b], n) =>
              type === 'f' ? (
                <TreeRow key={n}>
                  <FolderGuide><Chevron open={a === 1} /></FolderGuide>
                  <Folder open={a === 1} />
                  <TreeName $ml={4}>{mix(name)}</TreeName>
                  {b === 'new' && <Badge2 ml={5} />}
                </TreeRow>
              ) : (
                <TreeRow key={n}>
                  <ChildGuide $last={b === 'last'} />
                  {b === 'sel'
                    ? <SelIcon><Icon i={a} s={14} /><TreeName $ml={6}>{mix(name)}</TreeName></SelIcon>
                    : <><Icon i={a} s={14} /><TreeName $ml={6}>{mix(name)}</TreeName></>}
                  {b === 'new' && <Badge2 ml={2} />}
                </TreeRow>
              ))}
          </TreeBox>
          <NavBtn $h={21}>单构件输入</NavBtn>
          <NavBtn $h={21}>报表预览</NavBtn>
        </Nav>

        <Work>
          <Row $h={26}><ToolGroup start={204} end={994} items={row2} gh={24} /></Row>
          <Row $h={28}>
            <ToolGroup start={204} end={842} items={row3a} gh={26} />
            <ToolGroup start={844} end={1266} items={row3b} gh={26} ml={2} />
          </Row>
          <Row $h={30}>
            <ToolGroup start={204} end={1330} items={row4} gh={27} />
            <ToolGroup start={1333} end={1362} items={row4b} gh={27} ml={3} />
          </Row>
          <Cad />
          <Row $h={30}>
            <ToolGroup start={206} end={417} items={snapA} gh={24} ml={2} />
            <ToolGroup start={418} end={680} items={snapB} gh={24} ml={1} />
          </Row>
          <TablePanel>
            <SideGrip><CloseMark><svg width="8" height="9" viewBox="0 0 8 9"><path d="M0 0l8 9M8 0L0 9" stroke="#a04030" /></svg></CloseMark></SideGrip>
            <TableArea>
              <Row $h={30}><ToolGroup start={215} end={1366} items={tableTools} gh={26} bg="#f0f0f0" /></Row>
              <Sheet>
                <SheetGrid>
                  <Head $c="1" $r="1 / span 2" />
                  <Head $c="2" $r="1 / span 2">跨号</Head>
                  <Head $c="3 / span 2" $r="1">上部钢筋</Head>
                  <Head $c="5 / span 2" $r="1">下部钢筋</Head>
                  <Head $c="7 / span 3" $r="1" $hot>侧面钢筋</Head>
                  <Head $c="10" $r="1 / span 2">箍筋</Head>
                  <Head $c="11" $r="1 / span 2">肢数</Head>
                  <Head $c="12" $r="1 / span 2">次梁宽度</Head>
                  <Head $c="13" $r="1 / span 2">次梁加筋</Head>
                  <Head $c="14" $r="1 / span 2">吊筋</Head>
                  <Head $c="3" $r="2">跨中钢筋</Head>
                  <Head $c="4" $r="2">右支座钢筋</Head>
                  <Head $c="5" $r="2">下通长筋</Head>
                  <Head $c="6" $r="2">下部钢筋</Head>
                  <Head $c="7" $r="2" $hot>侧面通长筋</Head>
                  <Head $c="8" $r="2">侧面原位标注筋</Head>
                  <Head $c="9" $r="2">拉筋</Head>
                  <RowNo>1</RowNo>
                  <Cell $ink>{mix('1')}</Cell>
                  <Cell /><Cell /><Cell />
                  <Cell>{mix('6')}虫{mix('18 2/4')}</Cell>
                  <ActiveCell>{mix('N6')}虫{mix('12')}<Handle /></ActiveCell>
                  <Cell />
                  <Cell>{mix(' (')}中{mix('6)')}</Cell>
                  <Cell $pl={5}>中{mix('8@100(2)')}</Cell>
                  <Cell>{mix('2')}</Cell>
                  <Cell>{mix('200')}</Cell>
                  <Cell>{mix('0')}</Cell>
                  <Cell />
                </SheetGrid>
              </Sheet>
              <Scroll>
                <ScrollArrow><svg width="8" height="10" viewBox="0 0 8 10"><path d="M6 1L2 5l4 4" fill="none" stroke="#555" strokeWidth="1.600" /></svg></ScrollArrow>
                <ScrollTrack $l={546} $r={210}><ScrollThumb /></ScrollTrack>
                <ScrollArrow><svg width="8" height="10" viewBox="0 0 8 10"><path d="M2 1l4 4-4 4" fill="none" stroke="#555" strokeWidth="1.600" /></svg></ScrollArrow>
              </Scroll>
            </TableArea>
          </TablePanel>
        </Work>
      </Body>

      <Status>
        <StatusCell $w={147}>{mix('X=54866 Y=8878')}</StatusCell>
        <StatusCell $w={77}>{mix('层高:2.8m')}</StatusCell>
        <StatusCell $w={97}>{mix('底标高:7.47m')}</StatusCell>
        <StatusCell $w={47}>{mix('1(7)')}</StatusCell>
        <StatusCell $w={913}>{mix('按鼠标左键选择梁图元,按右键或ESC退出;可以通过回车键及shift+→←↑↓光标键在跨之间、上下输入框之间进行切换')}</StatusCell>
        <StatusCell $w={70}>{mix('132 FPS')}</StatusCell>
      </Status>

      <Taskbar>
        <StartBtn>
          <svg width="18" height="18" viewBox="0 0 18 18"><path d="M0 2.500l7.500-1v7H0zM8.500 1.300L18 0v8.500H8.500zM0 9.500h7.500v7L0 15.500zM8.500 9.500H18V18l-9.500-1.300z" fill="#fff" /></svg>
        </StartBtn>
        <Search>
          <svg width="22" height="22" viewBox="0 0 22 22"><circle cx="11" cy="11" r="8.500" fill="none" stroke="#e8e8e8" strokeWidth="2.500" /></svg>
          <SearchText>在这里输入你要搜索的内容</SearchText>
          <svg width="12" height="20" viewBox="0 0 12 20"><rect x="3.500" y="1" width="5" height="11" rx="2.500" fill="none" stroke="#aaa" /><path d="M1 8c0 7 10 7 10 0M6 14v4M3 18.500h6" fill="none" stroke="#aaa" /></svg>
        </Search>
        <TaskApp>{tApps[0]}</TaskApp>
        <TaskApp>{tApps[1]}</TaskApp>
        <TaskApp>{tApps[2]}</TaskApp>
        <TaskApp>{tApps[3]}</TaskApp>
        <TaskApp>{tApps[4]}</TaskApp>
        <TaskApp $on>{tApps[5]}</TaskApp>
        <TaskApp $on>{tApps[6]}</TaskApp>
        <TaskApp $on $active>{tApps[7]}</TaskApp>
        <TaskApp $on>{tApps[8]}</TaskApp>
        <Tray $w={60} $ml={155}><span>31%</span><span>CPU使用</span></Tray>
        <Tray $w={24} $ml={7}><svg width="14" height="9" viewBox="0 0 14 9"><path d="M1 8l6-6 6 6" fill="none" stroke="#eee" strokeWidth="1.300" /></svg></Tray>
        <Tray $w={24}><svg width="16" height="20" viewBox="0 0 16 20"><rect width="16" height="20" fill="#2c3a24" /><path d="M2 10c3-5 9-5 12 0-3 5-9 5-12 0z" fill="none" stroke="#76b900" strokeWidth="2" /><circle cx="8" cy="10" r="1.800" fill="#76b900" /></svg></Tray>
        <Tray $w={25}><svg width="18" height="14" viewBox="0 0 18 14"><rect x="6" y="3" width="11" height="9" fill="none" stroke="#eee" /><rect x="8" y="5" width="5" height="5" fill="#eee" /><path d="M2 1v4M5 1v4M1 5h5v2c0 2-2 2-2 2v4" fill="none" stroke="#eee" /></svg></Tray>
        <Tray $w={25}><svg width="16" height="14" viewBox="0 0 16 14"><path d="M1 13A12 12 0 0 1 13 1M4 13a9 9 0 0 1 9-9M7 13a6 6 0 0 1 6-6M10 13a3 3 0 0 1 3-3" fill="none" stroke="#bbb" strokeDasharray="2 1" /></svg></Tray>
        <Tray $w={22}><svg width="16" height="14" viewBox="0 0 16 14"><path d="M1 5h3l4-4v12L4 9H1z" fill="none" stroke="#eee" /><path d="M10 4c1.500 2 1.500 4 0 6M12.500 2c2.500 3 2.500 7 0 10" fill="none" stroke="#bbb" /></svg></Tray>
        <Tray $w={23}><TrayA>A</TrayA></Tray>
        <Tray $w={35}><svg width="18" height="18" viewBox="0 0 18 18"><rect x="2" y="2" width="14" height="14" rx="3" fill="#f0461c" transform="rotate(-8 9 9)" /><text x="9" y="14" textAnchor="middle" fontFamily="Liberation Sans, sans-serif" fontWeight="bold" fontSize="13" fill="#fff">S</text></svg></Tray>
        <Tray $w={72}><span>9:47</span><span>2017/7/24</span></Tray>
        <Tray $w={44}>
          <svg width="18" height="18" viewBox="0 0 18 18"><path d="M1 1h16v13H7l-3 3v-3H1z" fill="#fff" /><path d="M4 5h10M4 8h10M4 11h7" stroke="#222" /></svg>
          <NotifCount>2</NotifCount>
        </Tray>
      </Taskbar>

      <Badge>75</Badge>
      <Ellipse width="246" height="98" viewBox="0 0 246 98">
        <ellipse cx="123" cy="49" rx="116" ry="42" fill="none" stroke="#0000e0" strokeWidth="7.500" />
      </Ellipse>
      <Ime>
        <ImeSlot><ImeA>A</ImeA></ImeSlot>
        <ImeSlot><svg width="14" height="14" viewBox="0 0 14 14"><circle cx="4" cy="5" r="2" fill="#2a78c8" /><path d="M11 6c0 2-1 3-2 4" fill="none" stroke="#2a78c8" strokeWidth="1.600" /></svg></ImeSlot>
        <ImeSlot><svg width="14" height="20" viewBox="0 0 14 20"><rect x="4" y="1" width="6" height="11" rx="3" fill="#2a78c8" /><path d="M1 8c0 7 12 7 12 0M7 14v4M3 18.500h8" fill="none" stroke="#2a78c8" strokeWidth="1.500" /></svg></ImeSlot>
        <ImeSlot><svg width="18" height="14" viewBox="0 0 18 14"><rect width="18" height="14" rx="1" fill="#2a78c8" /><path d="M2 3h14M2 6h14M2 9h14" stroke="#fff" strokeDasharray="2 1" /><path d="M5 11.500h8" stroke="#fff" /></svg></ImeSlot>
        <ImeSlot><svg width="16" height="16" viewBox="0 0 16 16"><circle cx="6" cy="4" r="3" fill="#b4c0cc" /><path d="M1 13c0-7 10-7 10 0z" fill="#b4c0cc" /><rect x="7" y="10" width="9" height="5" fill="#b4c0cc" /></svg></ImeSlot>
        <ImeSlot><svg width="16" height="16" viewBox="0 0 16 16"><path d="M5 1l3 1 3-1 4 3-2 3-1-1v9H4V6L3 7 1 4z" fill="#2a78c8" /></svg></ImeSlot>
        <ImeSlot><svg width="16" height="16" viewBox="0 0 16 16"><path d="M2 14l7-7c-1-3 2-6 6-5l-3 3 1 2 2-1 .5 1c-1 3-4 4-6 3l-6 6z" fill="#2a78c8" /></svg></ImeSlot>
      </Ime>
      <SogouMark width="30" height="30" viewBox="0 0 30 30">
        <rect x="3" y="3" width="24" height="24" rx="4" fill="#f0501e" transform="rotate(-12 15 15)" />
        <text x="15" y="23" textAnchor="middle" fontFamily="Liberation Sans, sans-serif" fontWeight="bold" fontSize="22" fill="#fff">S</text>
      </SogouMark>
    </Page>
  );
}
